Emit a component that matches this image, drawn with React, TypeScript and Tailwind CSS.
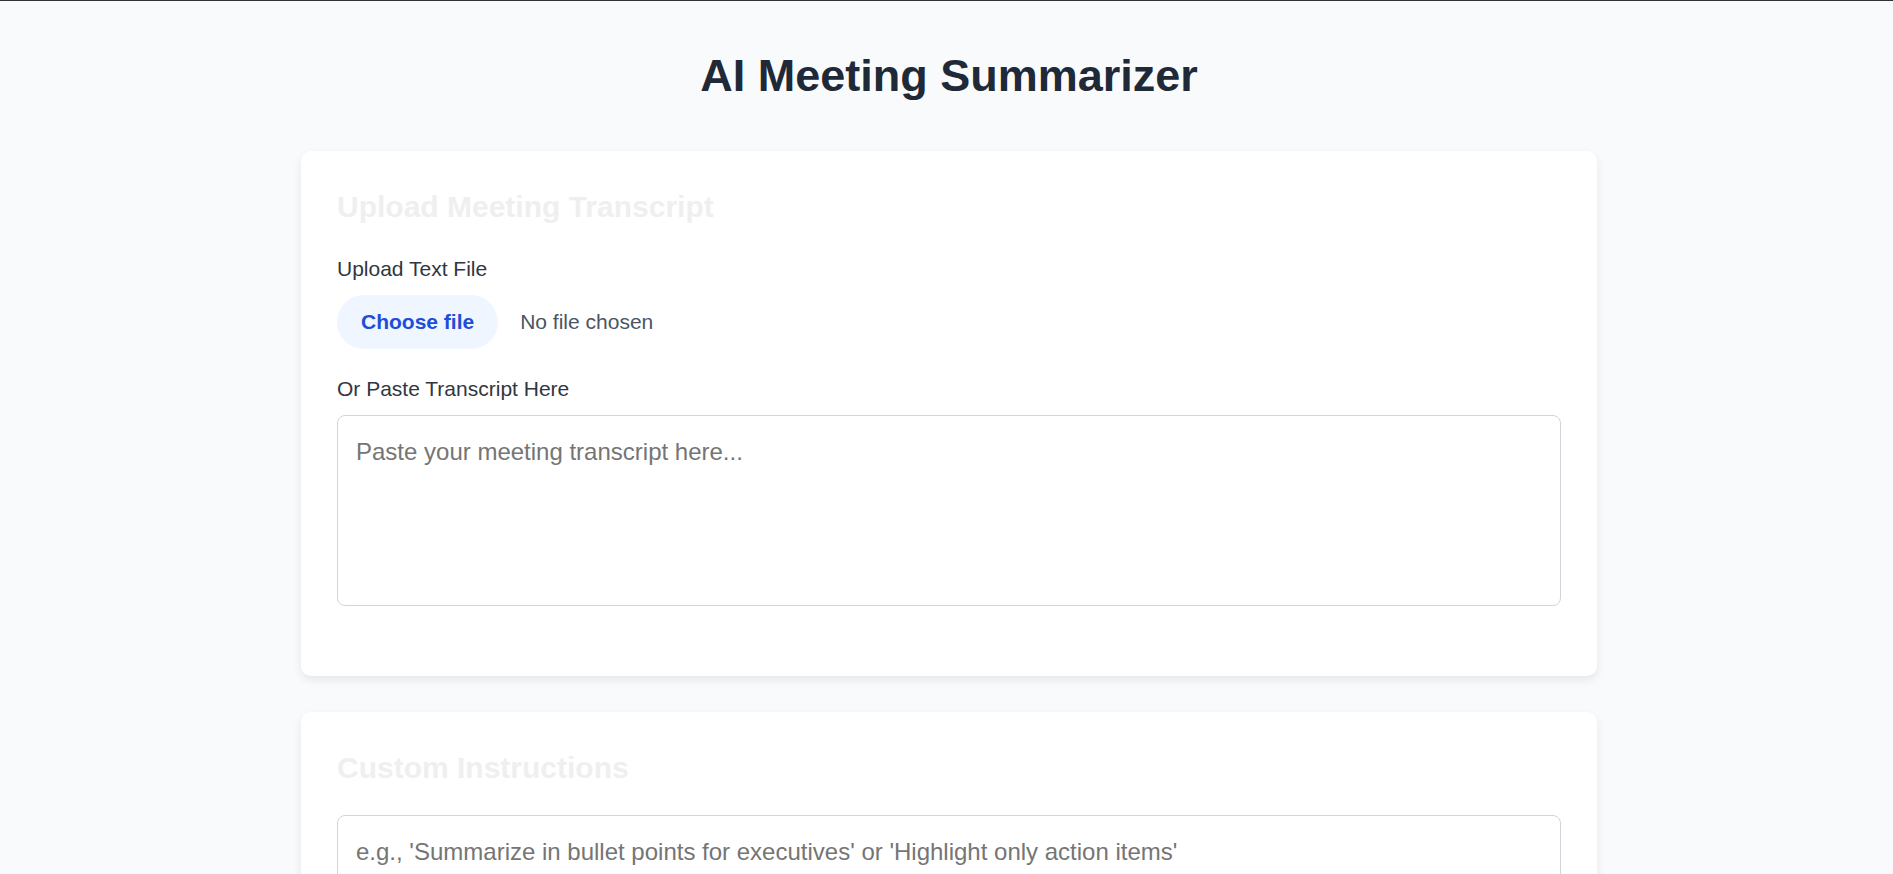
export default function App() {
  return (
    <div className="min-h-screen bg-[#f9fafb] border-t border-[#2f3337] font-['Liberation_Sans',Arial,sans-serif] pt-[48px] pb-10">
      <h1 className="text-center text-[45px] leading-[54px] font-bold text-[#1f2937] pl-[5px]">
        AI Meeting Summarizer
      </h1>

      <div className="flex flex-col items-center gap-[36px] mt-[48px] pl-[5px]">
        <section className="w-[1296px] bg-white rounded-[10px] shadow-[0_4px_10px_rgba(0,0,0,0.08)] px-[36px] pt-[38px] pb-[36px]">
          <h2 className="text-[30px] leading-[36px] font-bold text-[#efefef] mb-[30px]">
            Upload Meeting Transcript
          </h2>

          <label className="block text-[21px] leading-[28px] text-[#2f3742] mb-[12px]">
            Upload Text File
          </label>
          <div className="flex items-center gap-[22px] mb-[26px]">
            <button className="h-[54px] px-[24px] rounded-full bg-[#eff6ff] text-[#1d4ed8] text-[21px] leading-[28px] font-bold">
              Choose file
            </button>
            <span className="text-[21px] leading-[28px] text-[#4b5563]">No file chosen</span>
          </div>

          <label className="block text-[21px] leading-[28px] text-[#2f3742] mb-[12px]">
            Or Paste Transcript Here
          </label>
          <div className="mb-[34px]">
            <textarea
              placeholder="Paste your meeting transcript here..."
              className="block w-full h-[191px] resize-none rounded-[8px] border border-[#d1d5db] p-[18px] text-[24px] leading-[36px] text-[#1f2937] placeholder:text-[#757575] outline-none"
            />
          </div>
        </section>

        <section className="w-[1296px] bg-white rounded-[10px] shadow-[0_4px_10px_rgba(0,0,0,0.08)] px-[36px] pt-[38px] pb-[36px]">
          <h2 className="text-[30px] leading-[36px] font-bold text-[#efefef] mb-[29px]">
            Custom Instructions
          </h2>
          <textarea
            placeholder="e.g., 'Summarize in bullet points for executives' or 'Highlight only action items'"
            className="block w-full h-[130px] resize-none rounded-[8px] border border-[#d1d5db] p-[18px] text-[24px] leading-[36px] text-[#1f2937] placeholder:text-[#757575] outline-none"
          />
        </section>
      </div>
    </div>
  )
}
